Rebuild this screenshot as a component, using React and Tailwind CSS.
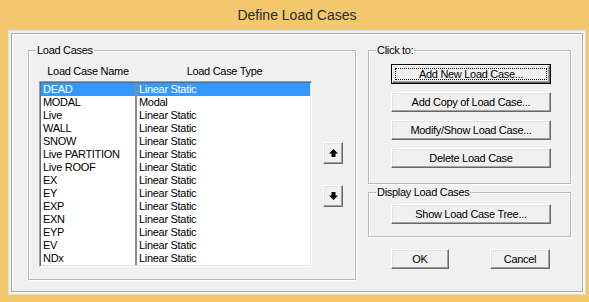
const rows = [
  ['DEAD', 'Linear Static'],
  ['MODAL', 'Modal'],
  ['Live', 'Linear Static'],
  ['WALL', 'Linear Static'],
  ['SNOW', 'Linear Static'],
  ['Live PARTITION', 'Linear Static'],
  ['Live ROOF', 'Linear Static'],
  ['EX', 'Linear Static'],
  ['EY', 'Linear Static'],
  ['EXP', 'Linear Static'],
  ['EXN', 'Linear Static'],
  ['EYP', 'Linear Static'],
  ['EV', 'Linear Static'],
  ['NDx', 'Linear Static'],
];

// classic raised 3D button
const raised =
  'bg-[#f0f0f0] border border-t-white border-l-white border-b-[#696969] border-r-[#696969] shadow-[inset_-1px_-1px_0_#a0a0a0,inset_1px_1px_0_#e3e3e3]';

function Btn({ children, className = '' }) {
  return (
    <div className={`${raised} h-[20px] flex items-center justify-center ${className}`}>
      {children}
    </div>
  );
}

function DefaultBtn({ children, className = '' }) {
  return (
    <div className={`h-[20px] border border-black ${className}`}>
      <div className={`${raised} h-full p-[2px]`}>
        <div className="h-full border border-dotted border-black flex items-center justify-center">
          {children}
        </div>
      </div>
    </div>
  );
}

function Arrow({ down }) {
  return (
    <div className={`${raised} w-[20px] h-[22px] flex items-center justify-center`}>
      <svg width="9" height="8" viewBox="0 0 9 8" className={down ? 'rotate-180' : ''}>
        <path d="M4.5 0 L9 4.5 L6.5 4.5 L6.5 8 L2.5 8 L2.5 4.5 L0 4.5 Z" fill="#000" />
      </svg>
    </div>
  );
}

function Group({ title, className = '', children }) {
  return (
    <fieldset
      className={`border border-[#b9b9b9] shadow-[inset_1px_1px_0_#fff,1px_1px_0_#fff] ${className}`}
    >
      <legend className="ml-[7px] px-[1px] h-[13px]">{title}</legend>
      {children}
    </fieldset>
  );
}

export default function App() {
  return (
    <div className="w-[589px] h-[302px] bg-[#f2c76d] flex flex-col overflow-hidden font-['Liberation_Sans',Arial,sans-serif] text-black">
      <div className="h-[30px] flex items-center justify-center pl-[5px] text-[14px] text-[#2b2b2b]">
        Define Load Cases
      </div>

      <div className="ml-[8px] w-[578px] h-[265px] bg-[#f0f0f0] border border-[#dedede] p-[2px]">
        <div className="h-full border border-[#a8a8a8] shadow-[inset_1px_1px_0_#fff,1px_1px_0_#fff] flex gap-[12px] pt-[10px] pl-[16px] text-[11px] leading-[13px] tracking-[-0.3px]">
          {/* Load Cases */}
          <Group title="Load Cases" className="w-[328px] h-[236px]">
            <div className="pl-[10px]">
              <div className="w-[273px] h-[13px] mt-[8px] flex">
                <div className="w-[96px] text-center pl-[2px]">Load Case Name</div>
                <div className="flex-1 text-center pl-[2px]">Load Case Type</div>
              </div>
              <div className="flex items-center mt-[3px]">
                <div className="w-[273px] bg-white border border-t-[#a0a0a0] border-l-[#a0a0a0] border-b-white border-r-white shadow-[inset_1px_1px_0_#696969,inset_-1px_-1px_0_#e3e3e3] p-[1px]">
                  {rows.map(([name, type], i) => (
                    <div
                      key={name}
                      className={`h-[13px] flex whitespace-nowrap ${i === 0 ? 'bg-[#3399ff] text-white' : ''}`}
                    >
                      <div className="w-[94px] pl-[2px]">{name}</div>
                      <div className="flex-1 pl-[2px] border-l-2 border-l-[#8c8c8c]">{type}</div>
                    </div>
                  ))}
                </div>
                <div className="ml-[11px] flex flex-col gap-[21px]">
                  <Arrow />
                  <Arrow down />
                </div>
              </div>
            </div>
          </Group>

          {/* right side */}
          <div className="w-[203px] flex flex-col">
            <Group title="Click to:" className="h-[140px]">
              <div className="pl-[22px] pt-[7px]">
                <div className="w-[160px] flex flex-col gap-[8px]">
                  <DefaultBtn>Add New Load Case...</DefaultBtn>
                  <Btn>Add Copy of Load Case...</Btn>
                  <Btn>Modify/Show Load Case...</Btn>
                  <Btn>Delete Load Case</Btn>
                </div>
              </div>
            </Group>

            <Group title="Display Load Cases" className="mt-[2px] h-[51px]">
              <div className="pl-[22px] pt-[5px]">
                <Btn className="w-[160px]">Show Load Case Tree...</Btn>
              </div>
            </Group>

            <div className="mt-[12px] pl-[23px] flex gap-[41px]">
              <Btn className="w-[58px]">OK</Btn>
              <Btn className="w-[60px]">Cancel</Btn>
            </div>
          </div>
        </div>
      </div>
    </div>
  );
}
